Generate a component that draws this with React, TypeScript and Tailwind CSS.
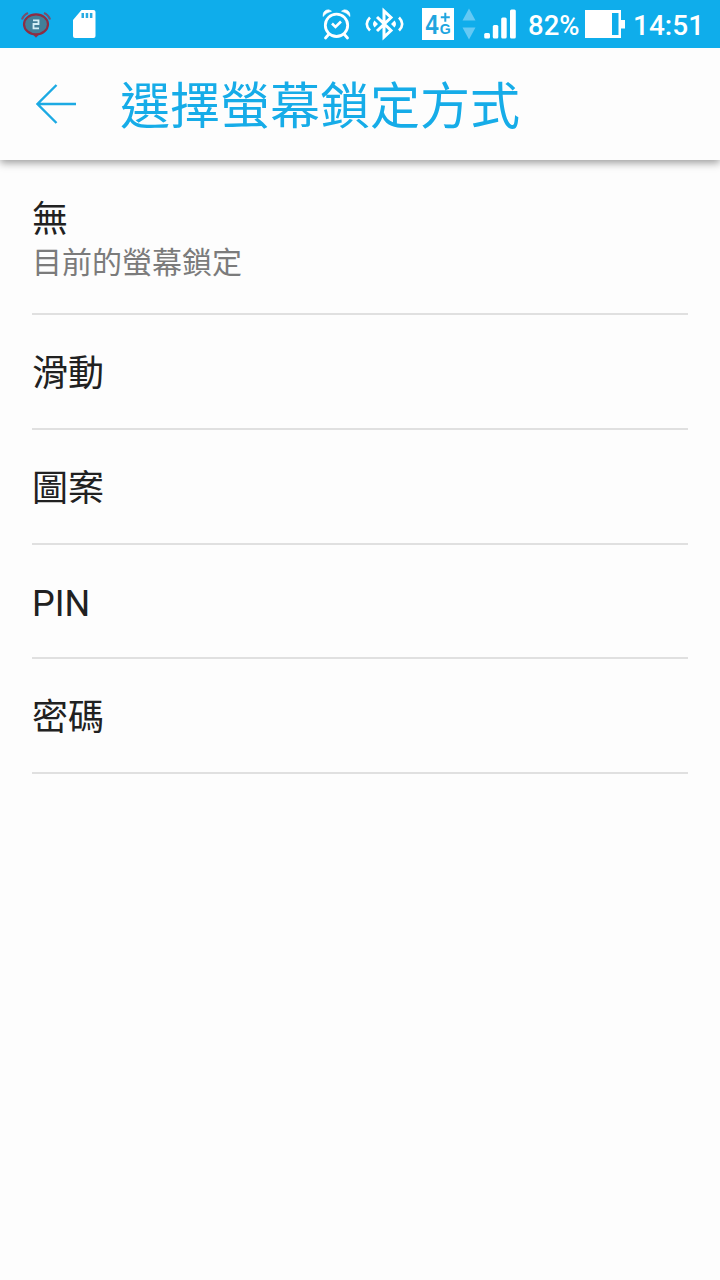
import React from "react";

interface LockOption {
  label: string;
  summary?: string;
}

const options: LockOption[] = [
  { label: "無", summary: "目前的螢幕鎖定" },
  { label: "滑動" },
  { label: "圖案" },
  { label: "PIN" },
  { label: "密碼" },
];

function RepeatAlarmIcon() {
  return (
    <svg className="ml-5 h-12 w-8" viewBox="20 0 32 48" fill="none">
      <path d="M22 19.5Q23.5 15 28 13M50 19.5Q48.5 15 44 13" stroke="#75506f" strokeWidth="2.2" />
      <path d="M31.5 33L36 37.8L40.5 33Z" fill="#873950" />
      <ellipse cx="36" cy="24.3" rx="12" ry="10" fill="#427f98" stroke="#8d2d43" strokeWidth="2.2" />
      <path d="M33 20.3H38.5V24H33.5V28.3H39" stroke="#d3eef5" strokeWidth="1.8" />
    </svg>
  );
}

function SdCardIcon() {
  return (
    <svg className="ml-5 h-12 w-6" viewBox="72 0 24 48">
      <path
        d="M81.5 10H93.5Q95.5 10 95.5 12V36Q95.5 38 93.5 38H75Q73 38 73 36V20Z"
        fill="#fff"
      />
      <path d="M81.5 13H84V18H81.5ZM85.7 13H88.2V18H85.7ZM89.9 13H92.4V18H89.9Z" fill="#29abe2" />
    </svg>
  );
}

function AlarmIcon() {
  return (
    <svg className="h-12 w-8" viewBox="320 0 32 48" fill="none" stroke="#fff">
      <circle cx="336.5" cy="25.3" r="11.2" strokeWidth="2.8" />
      <path d="M332 23.5L335.5 27L341 21.5" strokeWidth="2.6" />
      <path d="M329 34L325.5 38M344 34L347.5 38" strokeWidth="2.8" strokeLinecap="round" />
      <path
        d="M323 16.5Q322.5 12 326 10.2Q329 8.8 331.5 11.2Q326 12.5 323 16.5ZM350 16.5Q350.5 12 347 10.2Q344 8.8 341.5 11.2Q347 12.5 350 16.5Z"
        fill="#fff"
        strokeWidth="0.6"
      />
    </svg>
  );
}

function BluetoothIcon() {
  return (
    <svg className="ml-3 h-12 w-10" viewBox="364 0 40 48" fill="none" stroke="#fff" strokeWidth="3">
      <path d="M377 17L391 30.5L384 37V11L391 17.5L377 31" />
      <path d="M370 17.5Q363.5 24 370 30.5M399 17.5Q405.5 24 399 30.5" strokeWidth="2.6" />
      <path
        d="M374.5 20.5L378 24L374.5 27.5Q371.5 24 374.5 20.5ZM394.5 20.5L391 24L394.5 27.5Q397.5 24 394.5 20.5Z"
        fill="#fff"
        stroke="none"
      />
    </svg>
  );
}

function NetworkBadge() {
  return (
    <svg className="ml-[18px] h-12 w-8" viewBox="422 0 32 48">
      <path d="M422 8H454V40H422Z" fill="#fff" />
      <g fill="#20a5df" fontFamily="Liberation Sans, sans-serif" fontWeight="700">
        <text x="425.5" y="34.3" fontSize="27.5" textLength="13" lengthAdjust="spacingAndGlyphs">4</text>
        <text x="439.8" y="34.3" fontSize="14.5" textLength="11" lengthAdjust="spacingAndGlyphs">G</text>
      </g>
      <path d="M445.3 12.8V21.8M440.8 17.3H449.8" stroke="#20a5df" strokeWidth="2" />
    </svg>
  );
}

function DataArrowsIcon() {
  return (
    <svg className="ml-2 h-12 w-3.5" viewBox="462 0 14 48" fill="#65c9f4">
      <path d="M469 8.5L475.5 20.5H462.5ZM462.5 27.5H475.5L469 39.5Z" />
    </svg>
  );
}

function SignalIcon() {
  return (
    <svg className="ml-2 h-12 w-8" viewBox="484 0 32 48" fill="#fff">
      <rect x="484.2" y="33" width="5.8" height="5.5" rx="1.5" />
      <rect x="492.8" y="25" width="5.5" height="13.5" rx="1.5" />
      <rect x="501.2" y="17.5" width="5.5" height="21" rx="1.5" />
      <rect x="510" y="9.5" width="5.8" height="29" rx="1.5" />
    </svg>
  );
}

function BatteryIcon() {
  return (
    <svg className="h-12 w-10" viewBox="585 0 40 48" fill="#fff">
      <path d="M585 10H621V20H625V28.5H621V38H585ZM612 13V35H618.5V13Z" fillRule="evenodd" />
    </svg>
  );
}

function StatusBar() {
  return (
    <div className="flex h-12 items-center bg-[#0fadeb] text-white">
      <RepeatAlarmIcon />
      <SdCardIcon />
      <div className="ml-auto flex items-center pr-[17px] text-[28px] leading-[48px] font-medium">
        <AlarmIcon />
        <BluetoothIcon />
        <NetworkBadge />
        <DataArrowsIcon />
        <SignalIcon />
        <span className="ml-3 w-[57px] pt-[3px] text-[27.5px]">82%</span>
        <BatteryIcon />
        <span className="ml-2 w-[70px] pt-[3px]">14:51</span>
      </div>
    </div>
  );
}

export default function App() {
  return (
    <div className="min-h-[1280px] w-[720px] bg-[#fdfdfd] font-['Roboto','Noto_Sans_CJK_TC',sans-serif]">
      <StatusBar />
      <header className="flex h-28 items-center bg-[#fdfdfd] shadow-[0_3px_8px_rgba(0,0,0,0.38)] [clip-path:inset(0_0_-16px_0)]">
        <svg className="ml-9 h-10 w-10" viewBox="0 0 40 40" fill="none" stroke="#1caae3" strokeWidth="2.4">
          <path d="M40 20H2M20.5 1L1.5 20L20.5 39" />
        </svg>
        <h1 className="ml-11 pt-1.5 text-[50px] leading-[60px] text-[#16ace8]">選擇螢幕鎖定方式</h1>
      </header>
      <ul className="px-8">
        {options.map((option) => (
          <li
            key={option.label}
            className={
              option.summary
                ? "flex h-[155.4px] flex-col justify-center border-b-2 border-[#e0e0e0] pt-[6px]"
                : "flex h-[114.7px] flex-col justify-center border-b-2 border-[#e0e0e0] pt-[5px]"
            }
          >
            <span className="text-[36px] leading-[46px] text-[#212121]">{option.label}</span>
            {option.summary && (
              <span className="text-[30px] leading-[39px] text-[#7b7b7b]">{option.summary}</span>
            )}
          </li>
        ))}
      </ul>
    </div>
  );
}
